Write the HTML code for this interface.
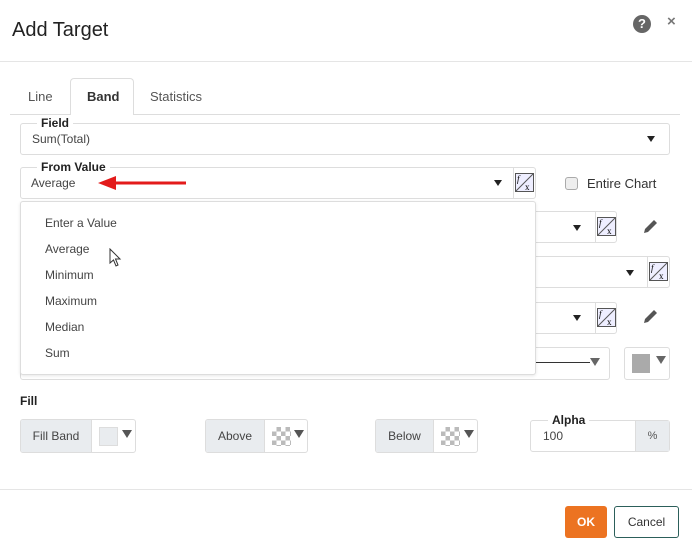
<!DOCTYPE html>
<html><head><style>
*{box-sizing:border-box;margin:0;padding:0}
body{width:692px;height:553px;background:#fff;font-family:"Liberation Sans",sans-serif;color:#333;position:relative;overflow:hidden}
.a{position:absolute}
.box{position:absolute;border:1px solid #ddd;border-radius:3px;background:#fff}
.lg{position:absolute;background:#fff;font-weight:bold;font-size:12px;color:#222;padding:0 4px}
.t{position:absolute;font-size:12px;color:#444}
.tri{position:absolute;width:0;height:0;border-left:4px solid transparent;border-right:4px solid transparent;border-top:6px solid #222}
.trig{position:absolute;width:0;height:0;border-left:5px solid transparent;border-right:5px solid transparent;border-top:8px solid #666}
.fx{position:absolute;width:22px;height:31px;border-left:1px solid #ddd}
.btn{position:absolute;border:1px solid #ddd;border-radius:3px;background:#fff;overflow:hidden}
.gp{position:absolute;left:0;top:0;bottom:0;background:#e9ecef;border-right:1px solid #ddd;font-size:12px;color:#444;text-align:center;line-height:31px}
</style></head><body>
<div class="a" style="left:12px;top:19px;font-size:20px;color:#222">Add Target</div>
<div class="a" style="left:633px;top:15px;width:18px;height:18px;border-radius:50%;background:#666;color:#fff;font-weight:bold;font-size:13px;text-align:center;line-height:18px">?</div>
<div class="a" style="left:667px;top:13px;font-size:15px;color:#777;font-weight:bold">×</div>
<div class="a" style="left:0;top:61px;width:692px;height:1px;background:#e5e5e5"></div>

<div class="a" style="left:10px;top:114px;width:670px;height:1px;background:#ddd"></div>
<div class="a" style="left:70px;top:78px;width:64px;height:37px;border:1px solid #ddd;border-bottom:none;border-radius:4px 4px 0 0;background:#fff"></div>
<div class="t" style="left:28px;top:89px;font-size:13px;color:#555">Line</div>
<div class="t" style="left:87px;top:89px;font-size:13px;font-weight:bold;color:#333">Band</div>
<div class="t" style="left:150px;top:89px;font-size:13px;color:#555">Statistics</div>

<div class="box" style="left:20px;top:123px;width:650px;height:32px"></div>
<div class="lg" style="left:37px;top:116px">Field</div>
<div class="t" style="left:32px;top:132px">Sum(Total)</div>
<div class="tri" style="left:647px;top:136px"></div>

<div class="box" style="left:20px;top:167px;width:516px;height:32px"></div>
<div class="lg" style="left:37px;top:160px">From Value</div>
<div class="t" style="left:31px;top:176px">Average</div>
<svg class="a" style="left:96px;top:175px" width="96" height="16"><line x1="12" y1="8" x2="90" y2="8" stroke="#e31b1b" stroke-width="3"/><polygon points="2,8 20,1 20,15" fill="#e31b1b"/></svg>
<div class="tri" style="left:494px;top:180px"></div>
<div class="fx" style="left:513px;top:167px"></div>
<svg class="a" style="left:515px;top:173px" width="19" height="19"><rect x="0.5" y="0.5" width="18" height="18" fill="#eef" stroke="#555"/><line x1="1" y1="18" x2="18" y2="1" stroke="#555"/><text x="2" y="9" font-size="9" font-style="italic" font-family="Liberation Serif">f</text><text x="10" y="17" font-size="9" font-family="Liberation Serif">x</text></svg>
<div class="a" style="left:565px;top:177px;width:13px;height:13px;border:1px solid #aaa;border-radius:3px;background:#eee"></div>
<div class="t" style="left:587px;top:176px;font-size:13px;color:#333">Entire Chart</div>

<div class="box" style="left:20px;top:211px;width:597px;height:32px"></div>
<div class="tri" style="left:573px;top:225px"></div>
<div class="fx" style="left:595px;top:211px"></div>
<svg class="a" style="left:597px;top:217px" width="19" height="19"><rect x="0.5" y="0.5" width="18" height="18" fill="#eef" stroke="#555"/><line x1="1" y1="18" x2="18" y2="1" stroke="#555"/><text x="2" y="9" font-size="9" font-style="italic" font-family="Liberation Serif">f</text><text x="10" y="17" font-size="9" font-family="Liberation Serif">x</text></svg>
<svg class="a" style="left:642px;top:218px" width="17" height="17"><path d="M2 15 L3 11 L12 2 L15 5 L6 14 Z" fill="#555"/></svg>

<div class="box" style="left:20px;top:256px;width:650px;height:32px"></div>
<div class="tri" style="left:626px;top:270px"></div>
<div class="fx" style="left:647px;top:256px"></div>
<svg class="a" style="left:649px;top:262px" width="19" height="19"><rect x="0.5" y="0.5" width="18" height="18" fill="#eef" stroke="#555"/><line x1="1" y1="18" x2="18" y2="1" stroke="#555"/><text x="2" y="9" font-size="9" font-style="italic" font-family="Liberation Serif">f</text><text x="10" y="17" font-size="9" font-family="Liberation Serif">x</text></svg>

<div class="box" style="left:20px;top:302px;width:597px;height:32px"></div>
<div class="tri" style="left:573px;top:315px"></div>
<div class="fx" style="left:595px;top:302px"></div>
<svg class="a" style="left:597px;top:308px" width="19" height="19"><rect x="0.5" y="0.5" width="18" height="18" fill="#eef" stroke="#555"/><line x1="1" y1="18" x2="18" y2="1" stroke="#555"/><text x="2" y="9" font-size="9" font-style="italic" font-family="Liberation Serif">f</text><text x="10" y="17" font-size="9" font-family="Liberation Serif">x</text></svg>
<svg class="a" style="left:642px;top:308px" width="17" height="17"><path d="M2 15 L3 11 L12 2 L15 5 L6 14 Z" fill="#555"/></svg>

<div class="box" style="left:20px;top:347px;width:590px;height:33px"></div>
<div class="a" style="left:535px;top:362px;width:55px;height:1px;background:#333"></div>
<div class="trig" style="left:590px;top:358px"></div>
<div class="box" style="left:624px;top:347px;width:46px;height:33px"></div>
<div class="a" style="left:632px;top:354px;width:18px;height:19px;background:#aaa"></div>
<div class="trig" style="left:656px;top:356px"></div>

<div class="a" style="left:20px;top:201px;width:516px;height:174px;border:1px solid #ddd;border-radius:3px;background:#fff;box-shadow:0 1px 3px rgba(0,0,0,.1)"></div>
<div class="t" style="left:45px;top:216px">Enter a Value</div>
<div class="t" style="left:45px;top:242px">Average</div>
<div class="t" style="left:45px;top:268px">Minimum</div>
<div class="t" style="left:45px;top:294px">Maximum</div>
<div class="t" style="left:45px;top:320px">Median</div>
<div class="t" style="left:45px;top:346px">Sum</div>
<svg class="a" style="left:109px;top:248px" width="14" height="20"><path d="M1 1 L1 15 L4.5 12 L7 18 L9 17 L6.5 11 L11 11 Z" fill="#fff" stroke="#333" stroke-width="1"/></svg>

<div class="a" style="left:20px;top:394px;font-size:12px;font-weight:bold;color:#222">Fill</div>
<div class="btn" style="left:20px;top:419px;width:116px;height:34px"><div class="gp" style="width:71px;line-height:32px">Fill Band</div><div class="a" style="left:78px;top:7px;width:19px;height:19px;background:#e9ecef;border:1px solid #ddd"></div><div class="trig" style="left:101px;top:10px;border-top-color:#555"></div></div>
<div class="btn" style="left:205px;top:419px;width:103px;height:34px"><div class="gp" style="width:59px;line-height:32px">Above</div><div class="a" style="left:66px;top:7px;width:19px;height:19px;background:repeating-conic-gradient(#bbb 0 25%,#fff 0 50%) 0 0/9px 9px"></div><div class="trig" style="left:88px;top:10px;border-top-color:#555"></div></div>
<div class="btn" style="left:375px;top:419px;width:103px;height:34px"><div class="gp" style="width:58px;line-height:32px">Below</div><div class="a" style="left:65px;top:7px;width:19px;height:19px;background:repeating-conic-gradient(#bbb 0 25%,#fff 0 50%) 0 0/9px 9px"></div><div class="trig" style="left:88px;top:10px;border-top-color:#555"></div></div>
<div class="box" style="left:530px;top:420px;width:140px;height:32px"><div class="a" style="right:0;top:0;bottom:0;width:34px;background:#e9ecef;border-left:1px solid #ddd;font-size:11px;text-align:center;line-height:30px;color:#555">%</div></div>
<div class="lg" style="left:548px;top:413px">Alpha</div>
<div class="t" style="left:543px;top:429px">100</div>

<div class="a" style="left:0;top:489px;width:692px;height:1px;background:#e5e5e5"></div>
<div class="a" style="left:565px;top:506px;width:42px;height:32px;background:#ec7321;border-radius:3px;color:#fff;font-size:12px;font-weight:bold;text-align:center;line-height:32px">OK</div>
<div class="a" style="left:614px;top:506px;width:65px;height:32px;border:1px solid #2c5f5a;border-radius:3px;color:#333;font-size:12px;text-align:center;line-height:30px">Cancel</div>
</body></html>
